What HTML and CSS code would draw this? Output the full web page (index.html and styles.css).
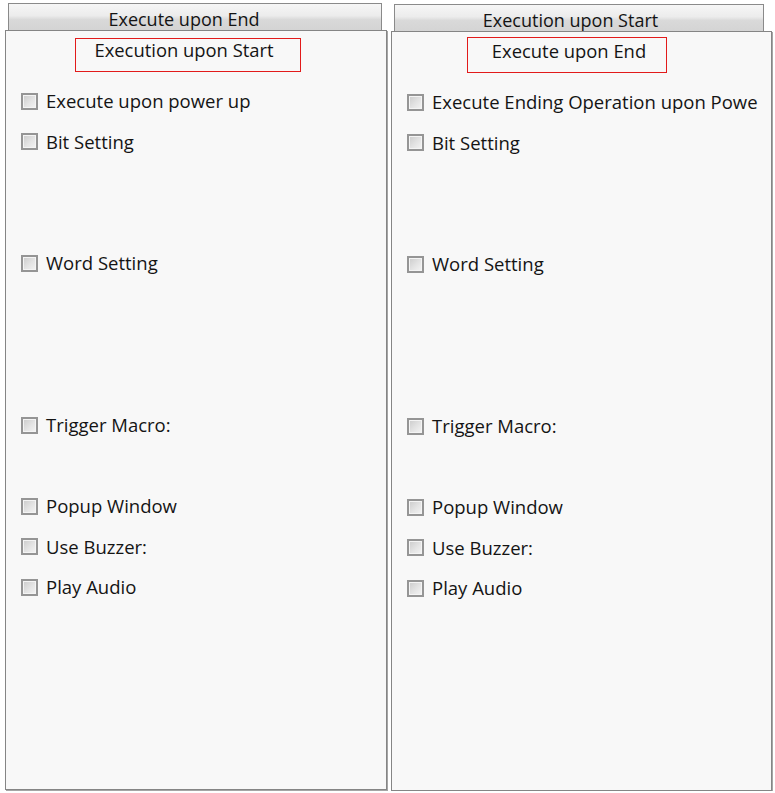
FILE: index.html
```html
<!DOCTYPE html>
<html>
<head>
<meta charset="utf-8">
<link rel="stylesheet" href="styles.css">
</head>
<body>
<div class="screen">
  <section class="panel panel-left">
    <div class="tab">Execute upon End</div>
    <div class="sheet">
      <div class="caption">Execution upon Start</div>
      <ul class="options">
        <li class="option"><span class="check"></span><span class="label">Execute upon power up</span></li>
        <li class="option skip-2"><span class="check"></span><span class="label">Bit Setting</span></li>
        <li class="option skip-3"><span class="check"></span><span class="label">Word Setting</span></li>
        <li class="option skip-1"><span class="check"></span><span class="label">Trigger Macro:</span></li>
        <li class="option"><span class="check"></span><span class="label">Popup Window</span></li>
        <li class="option"><span class="check"></span><span class="label">Use Buzzer:</span></li>
        <li class="option"><span class="check"></span><span class="label">Play Audio</span></li>
      </ul>
    </div>
  </section>
  <section class="panel panel-right">
    <div class="tab">Execution upon Start</div>
    <div class="sheet">
      <div class="caption">Execute upon End</div>
      <ul class="options">
        <li class="option"><span class="check"></span><span class="label">Execute Ending Operation upon Power up</span></li>
        <li class="option skip-2"><span class="check"></span><span class="label">Bit Setting</span></li>
        <li class="option skip-3"><span class="check"></span><span class="label">Word Setting</span></li>
        <li class="option skip-1"><span class="check"></span><span class="label">Trigger Macro:</span></li>
        <li class="option"><span class="check"></span><span class="label">Popup Window</span></li>
        <li class="option"><span class="check"></span><span class="label">Use Buzzer:</span></li>
        <li class="option"><span class="check"></span><span class="label">Play Audio</span></li>
      </ul>
    </div>
  </section>
</div>
</body>
</html>
```
FILE: styles.css
```css
html, body {
  margin: 0;
  padding: 0;
  background: #ffffff;
}
body {
  font-family: "Open Sans", "Noto Sans", "DejaVu Sans", sans-serif;
  color: #141414;
}
.screen {
  display: flex;
  align-items: flex-start;
  gap: 4px;
  padding: 3px 0 0 5px;
}
.panel {
  display: flex;
  flex-direction: column;
  width: 382px;
}
.panel-right {
  width: 381px;
  margin-top: 1px;
}
.tab {
  box-sizing: border-box;
  height: 27px;
  margin: 0 5px 0 3px;
  border: 1px solid #8a8a8a;
  border-bottom: none;
  background: linear-gradient(#f6f6f6 0%, #ececec 45%, #d9d9d9 60%, #d4d4d4 100%);
  font-size: 18px;
  line-height: 30px;
  text-align: center;
  padding-right: 22px;
  white-space: nowrap;
  overflow: hidden;
}
.panel-right .tab {
  margin: 0 8px 0 3px;
  padding-right: 17px;
}
.sheet {
  box-sizing: border-box;
  height: 760px;
  border: 1px solid #858585;
  background: #f8f8f8;
  box-shadow: 1px 1px 0 #a5a5a5;
  overflow: hidden;
}
.caption {
  box-sizing: border-box;
  width: 226px;
  height: 34px;
  margin: 7px 0 0 69px;
  border: 1px solid #e21b1b;
  font-size: 18.4px;
  line-height: 22px;
  padding: 0 8px 0 0;
  text-align: center;
  white-space: nowrap;
}
.panel-right .caption {
  width: 200px;
  height: 36px;
  margin: 5px 0 0 75px;
  padding: 2px 0 0 4px;
}
.options {
  list-style: none;
  margin: 9px 13px 0 0;
  padding: 0;
  overflow: hidden;
}
.option {
  display: flex;
  align-items: center;
  gap: 8px;
  height: 40.5px;
  padding-left: 15px;
  white-space: nowrap;
}
.option.skip-1 { margin-bottom: 40.5px; }
.option.skip-2 { margin-bottom: 81px; }
.option.skip-3 { margin-bottom: 121.5px; }
.check {
  flex: none;
  box-sizing: border-box;
  width: 17px;
  height: 17px;
  border: 2px solid #959595;
  background: linear-gradient(135deg, #cbcbcb 0%, #e4e4e4 55%, #f4f4f4 100%);
  box-shadow: inset 0 0 0 1px #f4f4f4;
}
.label {
  font-size: 18.5px;
  line-height: 22px;
}
```
